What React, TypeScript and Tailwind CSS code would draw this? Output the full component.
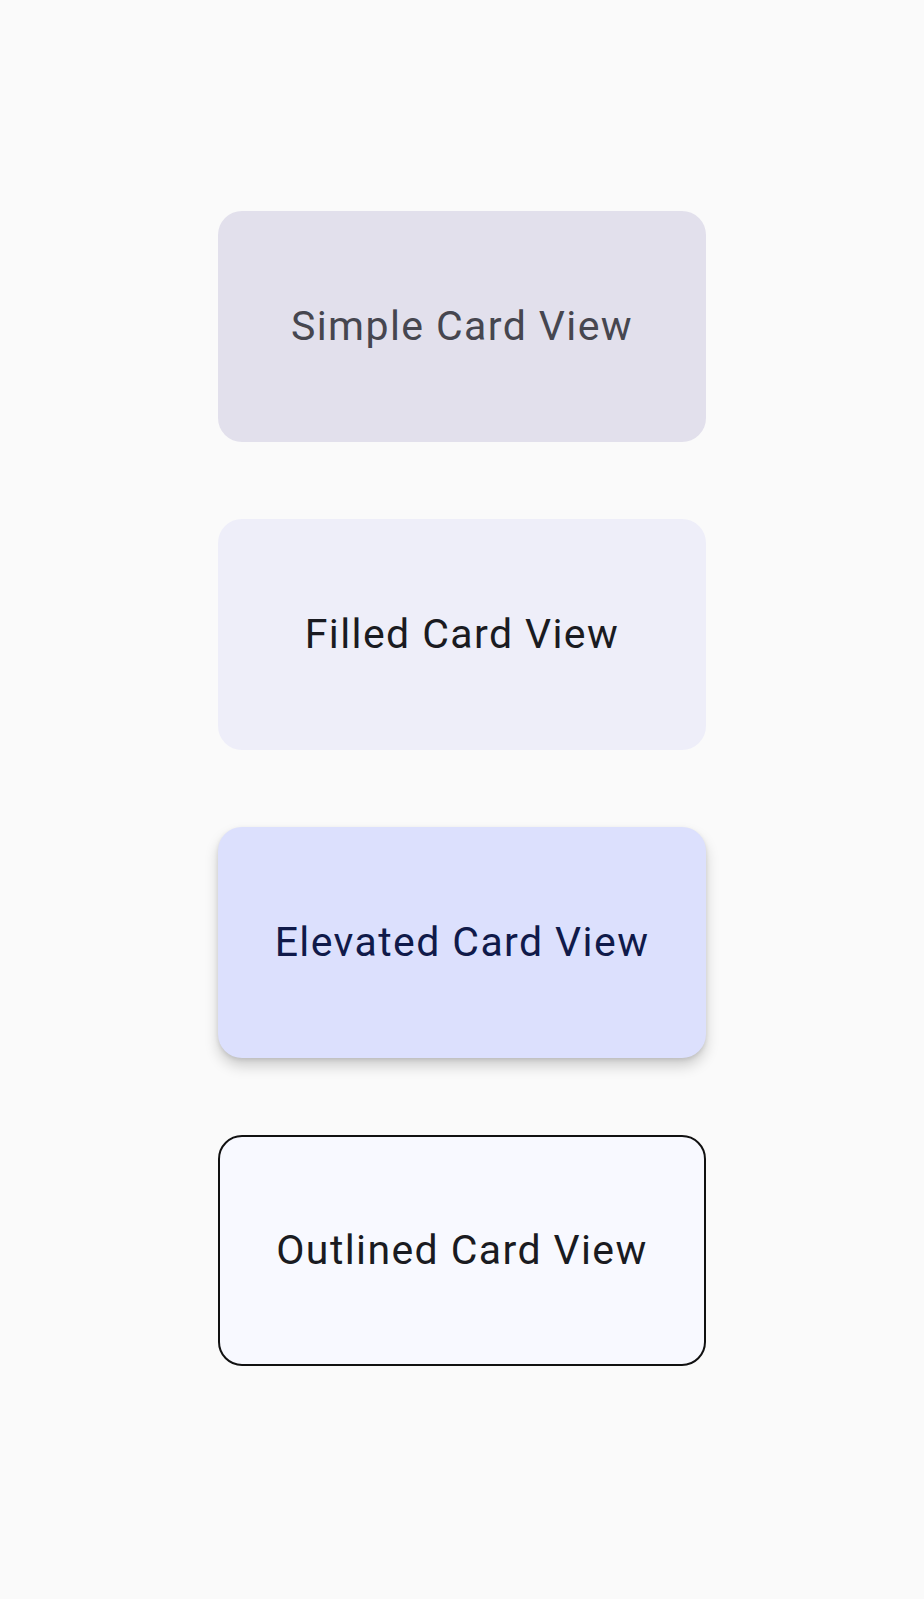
export default function App() {
  return (
    <div className="min-h-screen bg-[#fafafa] flex flex-col items-center pt-[211px] gap-[77px] font-['Roboto',sans-serif]">
      {/* Simple */}
      <div className="w-[488px] h-[231px] rounded-[24px] bg-[#e2e0ec] flex items-center justify-center">
        <span className="text-[41px] tracking-[1.4px] text-[#46464f]">Simple Card View</span>
      </div>

      {/* Filled */}
      <div className="w-[488px] h-[231px] rounded-[24px] bg-[#eeeef9] flex items-center justify-center">
        <span className="text-[41px] tracking-[1.4px] text-[#1a1b21]">Filled Card View</span>
      </div>

      {/* Elevated */}
      <div className="w-[488px] h-[231px] rounded-[24px] bg-[#dce0fd] flex items-center justify-center shadow-[0_8px_14px_rgba(0,0,0,0.18),0_2px_4px_rgba(0,0,0,0.1)]">
        <span className="text-[41px] tracking-[1.4px] text-[#101a4a]">Elevated Card View</span>
      </div>

      {/* Outlined */}
      <div className="w-[488px] h-[231px] rounded-[24px] bg-[#f8f9ff] border-[2.5px] border-[#111111] flex items-center justify-center">
        <span className="text-[41px] tracking-[1.4px] text-[#1a1b21]">Outlined Card View</span>
      </div>
    </div>
  )
}
